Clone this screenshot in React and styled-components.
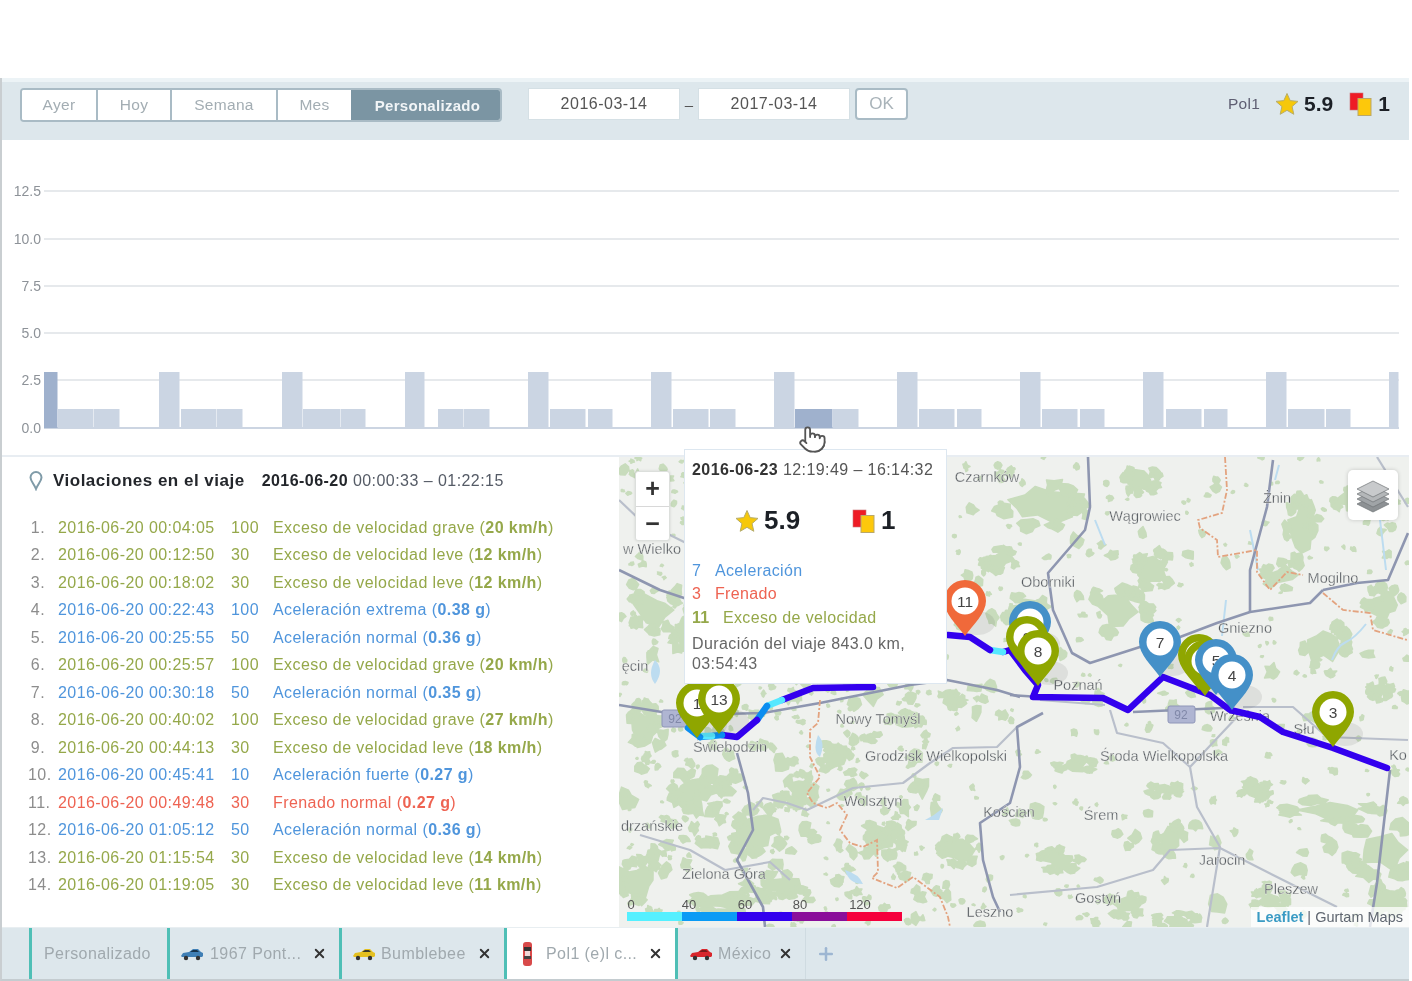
import React from "react";
import styled, { createGlobalStyle } from "styled-components";
import { Pointer, Plus, X } from "lucide-react";

const Global = createGlobalStyle`
  html, body { margin: 0; padding: 0; background: #fff; }
  * { box-sizing: border-box; }
  body { font-family: "Liberation Sans", Arial, sans-serif; }
`;

const C = { green: "#95a84a", blue: "#4f95dc", red: "#ee6352", bar: "#dde7ec", teal: "#4fbfb6" };

const Page = styled.div`
  width: 1412px; height: 981px; padding-top: 78px; overflow: hidden; background: #fff; filter: blur(0.7px);
`;
const Frame = styled.div`
  width: 1409px; height: 903px; border-left: 2px solid #c9ced1; border-bottom: 2px solid #c4ccd0;
  display: flex; flex-direction: column; position: relative;
`;
const Toolbar = styled.div`
  height: 62px; flex: none; background: ${C.bar}; border-top: 4px solid #ecf3f6; padding: 6px 19px 0 18px;
  display: flex; align-items: flex-start;
`;
const Segments = styled.div`
  display: flex; height: 34px; width: 482px; border: 2px solid #a9bbc5; border-radius: 4px; overflow: hidden; background: #fff;
`;
const Segment = styled.div`
  width: ${(p) => p.$w}px; flex: none; display: flex; align-items: center; justify-content: center;
  font-size: ${(p) => (p.$on ? 15 : 15.5)}px; letter-spacing: .3px; color: ${(p) => (p.$on ? "#f1f5f7" : "#a3adb3")}; background: ${(p) => (p.$on ? "#7b95a3" : "#fff")};
  font-weight: ${(p) => (p.$on ? 700 : 400)}; border-right: ${(p) => (p.$on || p.$last ? 0 : "2px solid #a9bbc5")};
`;
const DateInput = styled.div`
  width: 152px; height: 32px; margin-left: ${(p) => p.$ml}px; background: #fff; border: 1px solid #d5e0e5; display: flex; align-items: center; justify-content: center;
  font-size: 16px; letter-spacing: .5px; color: #555;
`;
const Dash = styled.div`width: 18px; height: 32px; line-height: 34px; text-align: center; font-size: 15px; color: #555;`;
const OkButton = styled.div`
  width: 53px; height: 32px; margin-left: 5px; background: #fff; border: 2px solid #a9bbc5; border-radius: 4px; display: flex; align-items: center; justify-content: center;
  font-size: 17px; color: #a9b3b9;
`;
const Right = styled.div`
  margin-left: auto; height: 32px; display: flex; align-items: center; color: #222;
`;
const DriverName = styled.span`font-size: 15.5px; color: #5e5e72; margin-right: 15px; letter-spacing: .3px;`;
const Rate = styled.div`display: flex; align-items: center; gap: ${(p) => p.$gap}px; font-size: ${(p) => p.$size}px; font-weight: ${(p) => p.$w}; color: #1c2026;`;
const Spacer = styled.div`width: 16px;`;
const Chart = styled.div`
  height: 317px; flex: none; border-bottom: 2px solid #e8edf2; position: relative;
`;
const ChartSvg = styled.svg`display: block; position: absolute; left: -2px; top: 0;`;
const Hand = styled.div`position: absolute; left: 796px; top: 285px; z-index: 5; line-height: 0;`;
const Body = styled.div`display: flex; height: 470px; flex: none;`;
const ListPanel = styled.div`width: 617px; flex: none; padding: 12px 0 0 26px;`;
const ListHead = styled.div`display: flex; align-items: center; height: 24px; margin-bottom: 21px; color: #222;`;
const HeadTitle = styled.span`font-size: 17px; font-weight: 700; letter-spacing: .5px; margin: 0 17px 0 9px; color: #23262b;`;
const HeadDate = styled.span`font-size: 16px; letter-spacing: .45px; color: #555b66; b { color: #23262b; }`;
const Row = styled.div`
  display: grid; grid-template-columns: 17px 186px 42px 1fr; height: 27.5px; align-items: center;
  font-size: 16px; letter-spacing: .42px; color: ${(p) => p.$c}; white-space: nowrap;
`;
const Num = styled.span`color: #8d8d8d; text-align: right;`;
const Stamp = styled.span`padding-left: 13px;`;
const MapPanel = styled.div`flex: 1; position: relative; background: #eff1ee;`;
const MapSvg = styled.svg`display: block; width: 790px; height: 470px;`;
const Zoom = styled.div`
  position: absolute; left: 16px; top: 14px; width: 35px; height: 70px; background: #fff; border: 1px solid #dcdfdc; border-radius: 3px;
  display: flex; flex-direction: column; box-shadow: 0 0 3px rgba(0,0,0,.12);
`;
const ZoomBtn = styled.div`
  flex: 1; display: flex; align-items: center; justify-content: center; font-size: 25px; font-weight: 700; color: #333;
  & + & { border-top: 1px solid #d8d8d8; }
`;
const Layers = styled.div`
  position: absolute; left: 729px; top: 13px; width: 50px; height: 50px; background: #fff; border-radius: 5px; box-shadow: 0 0 4px rgba(0,0,0,.18);
  display: flex; align-items: center; justify-content: center;
`;
const Attribution = styled.div`
  position: absolute; right: 0; bottom: 0; height: 20px; padding: 0 6px; background: rgba(255,255,255,.75); display: flex; align-items: center;
  font-size: 14.5px; color: #5f6670; white-space: pre; b { color: #3a9bc4; }
`;
const Tip = styled.div`
  position: absolute; left: 65px; top: -8px; width: 263px; height: 235px; background: #fff; border: 1px solid #dde7f0; padding: 11px 8px 0 7px; z-index: 4; color: #555;
`;
const TipDate = styled.div`font-size: 16px; letter-spacing: .42px; white-space: nowrap; b { color: #333; }`;
const TipRates = styled.div`display: flex; height: 40px; margin-top: 26px; padding-left: 43px;`;
const TipRate = styled.div`width: 117px; flex: none;`;
const TipLine = styled.div`
  display: flex; height: 23.5px; align-items: center; font-size: 16px; letter-spacing: .35px; color: ${(p) => p.$c};
  span { width: ${(p) => p.$w}px; font-weight: ${(p) => (p.$bold ? 700 : 400)}; }
`;
const TipLines = styled.div`margin-top: 14px;`;
const TipNote = styled.div`margin-top: 4px; font-size: 16px; letter-spacing: .4px; line-height: 20px; color: #666;`;
const Tabs = styled.div`height: 52px; flex: none; background: ${C.bar}; display: flex; padding-left: 27px; border-top: 1px solid #e8eef1;`;
const Tab = styled.div`
  width: ${(p) => p.$w}px; flex: none; display: flex; align-items: center; border-left: 3px solid ${C.teal};
  background: ${(p) => (p.$on ? "#fff" : "transparent")}; padding-left: ${(p) => p.$pl}px; position: relative; font-size: 16px; letter-spacing: .42px; color: #a0a9ae; white-space: nowrap;
`;
const TabLabel = styled.span`margin-left: ${(p) => p.$ml}px;`;
const TabClose = styled.span`position: absolute; right: 12px; top: 18px; line-height: 0; color: #333;`;
const AddTab = styled.div`width: 41px; border-left: 1px solid #cfdbe1; display: flex; align-items: center; justify-content: center; color: #9db6d2;`;

const Star = ({ s = 24 }) => (
  <svg width={s} height={s} viewBox="0 0 24 24"><polygon points="12,1.5 15.2,8.6 23,9.4 17.1,14.6 18.8,22.3 12,18.3 5.2,22.3 6.9,14.6 1,9.4 8.8,8.6" fill="#f6c80a" stroke="#b7ad6a" strokeWidth="1" /></svg>
);
const Cards = ({ s = 24 }) => (
  <svg width={s} height={s} viewBox="0 0 24 24"><rect x="1" y="1" width="13" height="17" fill="#ee1c25" stroke="#c9777a" strokeWidth=".6" /><rect x="9" y="6.5" width="13" height="17" fill="#fdc80b" stroke="#b9a86a" strokeWidth="1" /></svg>
);

const rand = (() => { let a = 48271; return () => { a = (a + 0x6d2b79f5) | 0; let t = Math.imul(a ^ (a >>> 15), 1 | a); t = (t + Math.imul(t ^ (t >>> 7), 61 | t)) ^ t; return ((t ^ (t >>> 14)) >>> 0) / 4294967296; }; })();
const blob = (x, y, rx, ry) => {
  const n = 8 + Math.floor(rand() * 5); let d = "";
  for (let i = 0; i < n; i++) { const a = (i / n) * Math.PI * 2, k = 0.5 + rand() * 0.65; d += `${i ? "L" : "M"}${(x + Math.cos(a) * rx * k).toFixed(1)} ${(y + Math.sin(a) * ry * k).toFixed(1)}`; }
  return d + "Z";
};
const big = [[1040,505,42,24],[1120,612,30,24],[1155,570,20,20],[1142,480,18,14],[1300,530,15,34],[1285,575,22,14],[1345,500,12,10],[1385,605,20,20],[1325,645,24,24],[1385,850,38,30],[1330,810,46,12],[1255,790,16,10],[1170,840,16,16],[1025,610,22,16],[1075,765,20,8],[1165,790,18,7],[655,610,26,22],[645,730,20,26],[690,640,18,16],[700,790,30,22],[760,830,26,24],[800,790,16,18],[835,760,16,14],[880,840,24,18],[730,900,36,14],[640,880,22,22],[780,885,26,12],[960,850,20,16],[900,650,12,10],[905,720,18,8],[1000,560,18,12],[950,700,14,8],[1125,905,20,12],[1270,900,18,12],[1388,900,16,18],[1060,860,22,12],[1175,920,22,8],[1380,690,12,10]];
const greens = (() => {
  let d = "";
  big.forEach(([x, y, rx, ry]) => {
    d += blob(x, y, rx * 0.8, ry * 0.8);
    for (let i = 0; i < 10; i++) { const a = rand() * 6.28; d += blob(x + Math.cos(a) * rx * 0.9, y + Math.sin(a) * ry * 0.9, rx * 0.22 + 2, ry * 0.22 + 2); }
  });
  for (let i = 0; i < 900; i++) {
    const left = i < 380; const x = left ? 619 + rand() * 320 : 619 + rand() * 790; const y = 457 + rand() * 470; const r = 1.5 + rand() * rand() * (left ? 11 : 8);
    d += blob(x, y, r, r * (0.6 + rand() * 0.7));
  }
  return d;
})();
const roads = [
  "M1088 457L1090 507 1085 530 1048 573 1053 610 1072 653 1090 663 1140 647 1180 637 1217 623 1250 612 1310 603 1323 590",
  "M1250 612L1250 570 1267 507 1273 460", "M1323 590L1357 583 1388 580 1408 533",
  "M1010 695L1040 697", "M1043 713L1017 727 1020 767 1010 803 980 823 983 860 993 897 1000 912", "M1133 712L1223 708", "M1390 770L1377 883 1370 927",
  "M619 705L680 715 763 713 820 703 910 685 947 680 997 690 1020 697", "M737 753L748 793 753 830 737 860 763 907 765 927", "M619 570L660 590 690 600",
];
const lightRoads = [
  "M1377 457L1408 507", "M1243 707L1293 707 1327 737 1408 740", "M1237 717L1190 767 1197 807 1220 847 1207 927", "M1110 710L1117 733 1163 743 1190 767",
  "M1010 895L1097 887 1153 870 1170 850 1220 848 1277 877 1337 907", "M753 810L763 798 787 803 807 810 853 788 903 783 930 763 953 748 997 747 1017 727",
  "M640 835L690 850 725 870 770 862 790 880", "M619 500L640 520 690 545", "M1040 700L1105 705",
];
const border = "M1225 457L1227 490 1222 513 1198 520 1200 528 1217 540 1218 557 1257 550 1257 572 1270 590 1287 572 1303 575M1323 593L1343 610 1370 613 1373 630 1407 640M820 700L818 723 810 730 810 757 820 777 807 793 813 803 827 808 837 803 847 815 840 830 850 843 863 847 877 840 878 872 872 878 897 888 913 877 940 897 948 917 950 927";
const labels = [
  ["Czarnków",987,482],["Wągrowiec",1145,521],["Żnin",1277,503],["Mogilno",1333,583],["Gniezno",1245,633],["Oborniki",1048,587],["Poznań",1078,690],["Września",1240,721],["Nowy Tomyśl",878,724],["Świebodzin",730,752],["Grodzisk Wielkopolski",936,761],["Środa Wielkopolska",1164,761],["Wolsztyn",873,806],["Kościan",1009,817],["Śrem",1101,820],["Zielona Góra",724,879],["Jarocin",1222,865],["Pleszew",1291,894],["Gostyń",1098,903],["Leszno",990,917],["w Wielko",652,554],["ęcin",635,671],["drzańskie",652,831],["Słu",1304,734],["Ko",1398,760],
];
const segs = [
  ["#3300ee","M1387 768L1333 748 1283 732 1260 717 1230 710 1210 695 1163 677 1128 710 1103 698 1033 697 1038 685 1025 670 1010 650"],
  ["#3300ee","M1010 650L1003 652"],["#55e8ff","M1003 652L990 650"],["#3300ee","M990 650L970 637 948 635"],
  ["#3300ee","M873 687L813 688 782 700"],["#55e8ff","M782 700L767 706"],["#0a8df0","M767 706L757 720"],["#3300ee","M757 720L737 737 722 735"],["#0a8df0","M722 735L700 737"],["#55e8ff","M712 736L702 736"],["#0a8df0","M700 737L688 728"],
];
const pins = [
  ["#4490c8","10",1030,622],["#8fa600","9",1027,637],["#8fa600","8",1038,651],["#f0693a","11",965,601],["#4490c8","7",1160,642],["#8fa600","",1199,655],["#8fa600","",1205,661],["#4490c8","5",1216,660],["#4490c8","4",1232,675],["#8fa600","3",1333,712],["#8fa600","1",697,703],["#8fa600","13",719,699],
];
const Pin = ({ c, t, x, y }) => (
  <g transform={`translate(${x} ${y})`}>
    <ellipse cx="12" cy="22" rx="18" ry="12" fill="#444" opacity=".1" />
    <path d="M0 35C-8 24-21 12-21 0A21 21 0 0 1 21 0C21 12 8 24 0 35Z" fill={c} />
    <circle r="13.5" fill="#fff" />
    <text y="5.5" textAnchor="middle" fontSize="15.5" fill="#444">{t}</text>
  </g>
);
const RoadSet = ({ list, c, w }) => list.map((d) => <path key={d} d={d} fill="none" stroke={c} strokeWidth={w} strokeLinejoin="round" />);

const MapArt = () => (
  <MapSvg viewBox="619 457 790 470">
    <path d={greens} fill="#c8dcbc" stroke="#c8dcbc" strokeWidth="1.5" strokeLinejoin="round" />
    <path d="M1332 660q5 -14 14 -18t20-18M1226 600l-4 36M1095 520l10 25M1250 530l8 40M1275 480l4-15M845 650l-8 15M1380 520l6 50" fill="none" stroke="#bcdcf0" strokeWidth="2" />
    <path d="M818 735q8 8 2 22-8-6-2-22ZM845 870q14 4 18 14-14 0-18-14ZM655 660q10 10 0 24-8-10 0-24ZM925 820q10-5 18-12l-4 12Z" fill="#bcdcf0" />
    <RoadSet list={lightRoads} c="#b9bfcb" w="2.2" />
    <RoadSet list={roads} c="#8e96b0" w="2.6" />
    <path d={border} fill="none" stroke="#e3a37f" strokeWidth="1.8" strokeDasharray="6 2 2 2" />
    <rect x="1168" y="706" width="27" height="17" rx="2" fill="#afb5d2" stroke="#8f96b8" />
    <text x="1181" y="719" textAnchor="middle" fontSize="12" fill="#8088a8">92</text>
    <rect x="662" y="710" width="27" height="17" rx="2" fill="#afb5d2" stroke="#8f96b8" />
    <text x="675" y="723" textAnchor="middle" fontSize="12" fill="#8088a8">92</text>
    {labels.map(([t, x, y]) => <text key={t} x={x} y={y} textAnchor="middle" fontSize="14.5" fill="#50555a" stroke="#f2f3f1" strokeWidth=".3">{t}</text>)}
    {segs.map(([c, d]) => <path key={d} d={d} fill="none" stroke={c} strokeWidth="6.5" strokeLinejoin="round" strokeLinecap="round" />)}
    {pins.map(([c, t, x, y], i) => <Pin key={i} c={c} t={t} x={x} y={y} />)}
    {[["#55f0ff",627],["#0a9bf5",682],["#3300ee",737],["#8a0e9a",792],["#f5003c",847]].map(([c, x]) => <rect key={c} x={x} y="912" width="55" height="9" fill={c} />)}
    {[["0",631],["40",689],["60",745],["80",800],["120",860]].map(([t, x]) => <text key={t} x={x} y="909" textAnchor="middle" fontSize="13" fill="#555">{t}</text>)}
  </MapSvg>
);

const gridY = [[428,"0.0"],[380,"2.5"],[333,"5.0"],[286,"7.5"],[239,"10.0"],[191,"12.5"]];
const bars = [
  [44,58,3,1],[58,94,1],[94,120,1],[159,180,3],[181,217,1],[217,243,1],[282,303,3],[303,341,1],[341,366,1],[405,425,3],[438,464,1],[464,490,1],
  [528,549,3],[550,586,1],[588,613,1],[651,672,3],[673,709,1],[710,736,1],[774,795,3],[795,833,1,1],[833,859,1],[897,918,3],[919,955,1],[957,982,1],
  [1020,1041,3],[1042,1078,1],[1080,1105,1],[1143,1164,3],[1166,1202,1],[1204,1228,1],[1266,1287,3],[1288,1325,1],[1326,1351,1],[1389,1399,3],
];
const ChartArt = () => (
  <ChartSvg width="1409" height="317" viewBox="0 140 1409 317">
    {gridY.map(([y, t]) => (
      <g key={t}>
        <line x1="44" x2="1399" y1={y} y2={y} stroke={y === 428 ? "#ccd5e2" : "#e6e9ec"} strokeWidth="2" />
        <text x="41" y={y + 5} textAnchor="end" fontSize="14" fill="#8d9298">{t}</text>
      </g>
    ))}
    {bars.map(([a, b, v, on], i) => <rect key={i} x={a} width={b - a - 0.5} y={v === 3 ? 372 : 409} height={v === 3 ? 56 : 19} fill={on ? "#9fb1cd" : "#cbd5e3"} />)}
  </ChartSvg>
);

const rows = [
  ["2016-06-20 00:04:05","100","Exceso de velocidad grave","20 km/h",C.green],["2016-06-20 00:12:50","30","Exceso de velocidad leve","12 km/h",C.green],
  ["2016-06-20 00:18:02","30","Exceso de velocidad leve","12 km/h",C.green],["2016-06-20 00:22:43","100","Aceleración extrema","0.38 g",C.blue],
  ["2016-06-20 00:25:55","50","Aceleración normal","0.36 g",C.blue],["2016-06-20 00:25:57","100","Exceso de velocidad grave","20 km/h",C.green],
  ["2016-06-20 00:30:18","50","Aceleración normal","0.35 g",C.blue],["2016-06-20 00:40:02","100","Exceso de velocidad grave","27 km/h",C.green],
  ["2016-06-20 00:44:13","30","Exceso de velocidad leve","18 km/h",C.green],["2016-06-20 00:45:41","10","Aceleración fuerte","0.27 g",C.blue],
  ["2016-06-20 00:49:48","30","Frenado normal","0.27 g",C.red],["2016-06-20 01:05:12","50","Aceleración normal","0.36 g",C.blue],
  ["2016-06-20 01:15:54","30","Exceso de velocidad leve","14 km/h",C.green],["2016-06-20 01:19:05","30","Exceso de velocidad leve","11 km/h",C.green],
];

const CarSide = ({ c, top }) => (
  <svg width="24" height="14" viewBox="0 0 24 14"><path d="M1 9l2-3 6-1 4-3h5l3 3 2 1v3l-1 1H2Z" fill={c} /><path d="M10 5l3-2h4l2 2Z" fill={top} /><circle cx="6" cy="11" r="2.2" fill="#333" /><circle cx="18" cy="11" r="2.2" fill="#333" /></svg>
);
const CarTop = () => (
  <svg width="13" height="26" viewBox="0 0 13 26"><rect x="2" y="1" width="9" height="24" rx="3" fill="#d84a4a" /><rect x="3" y="6" width="7" height="4" fill="#333" /><rect x="3" y="15" width="7" height="3" fill="#444" /><rect x="4" y="10" width="5" height="5" fill="#f0d8d8" /></svg>
);
const tabs = [
  { w: 138, pl: 12, t: "Personalizado", ml: 0 }, { w: 172, pl: 10, t: "1967 Pont...", icon: <CarSide c="#3f7fb5" top="#16324a" />, ml: 6, x: 1 },
  { w: 165, pl: 10, t: "Bumblebee", icon: <CarSide c="#e4c020" top="#3a3a2a" />, ml: 5, x: 1 }, { w: 171, pl: 14, t: "Pol1 (e)l c...", icon: <CarTop />, ml: 12, x: 1, on: 1 },
  { w: 130, pl: 11, t: "México", icon: <CarSide c="#d8262c" top="#7a1a1a" />, ml: 5, x: 1 },
];

export default function App() {
  return (
    <Page>
      <Global />
      <Frame>
        <Toolbar>
          <Segments>
            <Segment $w={76}>Ayer</Segment><Segment $w={74}>Hoy</Segment><Segment $w={106}>Semana</Segment><Segment $w={73} $last>Mes</Segment><Segment $w={153} $on>Personalizado</Segment>
          </Segments>
          <DateInput $ml={26}>2016-03-14</DateInput><Dash>–</Dash><DateInput $ml={0}>2017-03-14</DateInput><OkButton>OK</OkButton>
          <Right>
            <DriverName>Pol1</DriverName>
            <Rate $gap={5} $size={21} $w={700}><Star /><span>5.9</span></Rate>
            <Spacer />
            <Rate $gap={5} $size={21} $w={700}><Cards /><span>1</span></Rate>
          </Right>
        </Toolbar>
        <Chart>
          <ChartArt />
          <Hand><Pointer size={29} fill="#fff" color="#555" strokeWidth={1.5} /></Hand>
        </Chart>
        <Body>
          <ListPanel>
            <ListHead>
              <svg width="16" height="20" viewBox="0 0 16 20"><path d="M8 18C6 13 2.500 10 2.500 6.500a5.500 5.500 0 0 1 11 0C13.500 10 10 13 8 18Z" fill="none" stroke="#7f9ba8" strokeWidth="2" /></svg>
              <HeadTitle>Violaciones en el viaje</HeadTitle>
              <HeadDate><b>2016-06-20</b> 00:00:33 – 01:22:15</HeadDate>
            </ListHead>
            {rows.map(([ts, v, d, n, c], i) => (
              <Row key={ts} $c={c}>
                <Num>{i + 1}.</Num>
                <Stamp>{ts}</Stamp>
                <span>{v}</span>
                <span>{d} (<b>{n}</b>)</span>
              </Row>
            ))}
          </ListPanel>
          <MapPanel>
            <MapArt />
            <Zoom><ZoomBtn>+</ZoomBtn><ZoomBtn>−</ZoomBtn></Zoom>
            <Layers>
              <svg width="36" height="38" viewBox="0 0 36 38">
                {[28, 23, 18, 13].map((y, i) => <path key={y} d={`M18 ${y - 8}L34 ${y}L18 ${y + 8}L2 ${y}Z`} fill={["#8d9194", "#a0a4a7", "#b4b7b9", "#c8cacc"][i]} stroke="#6f7376" strokeWidth=".7" />)}
              </svg>
            </Layers>
            <Attribution><b>Leaflet</b> | Gurtam Maps</Attribution>
            <Tip>
              <TipDate><b>2016-06-23</b> 12:19:49 – 16:14:32</TipDate>
              <TipRates>
                <TipRate><Rate $gap={5} $size={26} $w={700}><Star /><span>5.9</span></Rate></TipRate>
                <TipRate><Rate $gap={5} $size={26} $w={700}><Cards /><span>1</span></Rate></TipRate>
              </TipRates>
              <TipLines>
                <TipLine $c={C.blue} $w={23}><span>7</span>Aceleración</TipLine>
                <TipLine $c={C.red} $w={23}><span>3</span>Frenado</TipLine>
                <TipLine $c={C.green} $w={31} $bold><span>11</span>Exceso de velocidad</TipLine>
              </TipLines>
              <TipNote>Duración del viaje 843.0 km,<br />03:54:43</TipNote>
            </Tip>
          </MapPanel>
        </Body>
        <Tabs>
          {tabs.map((t) => (
            <Tab key={t.t} $w={t.w} $pl={t.pl} $on={t.on}>
              {t.icon}
              <TabLabel $ml={t.ml}>{t.t}</TabLabel>
              {t.x && <TabClose><X size={15} strokeWidth={3} /></TabClose>}
            </Tab>
          ))}
          <AddTab><Plus size={20} strokeWidth={3} /></AddTab>
        </Tabs>
      </Frame>
    </Page>
  );
}
